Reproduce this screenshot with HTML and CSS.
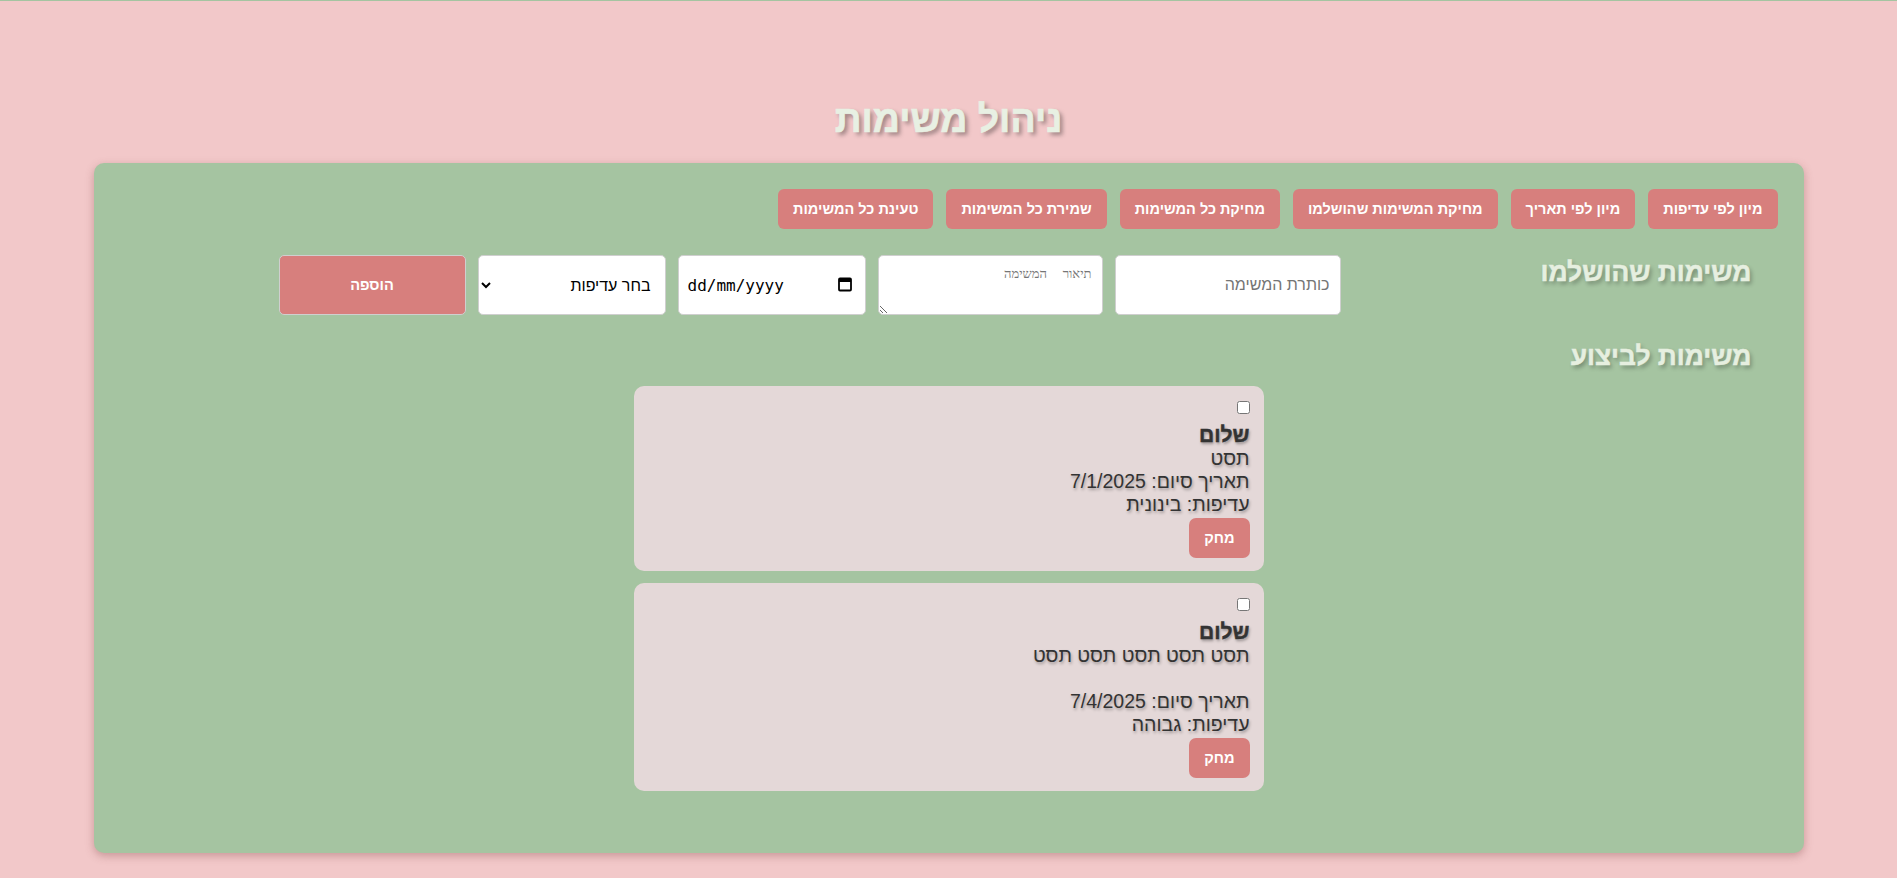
FILE: index.html
```html
<!DOCTYPE html>
<html lang="he" dir="rtl">
<head>
<meta charset="utf-8">
<title>ניהול משימות</title>
<link rel="stylesheet" href="styles.css">
</head>
<body>
<h1 class="page-title">ניהול משימות</h1>
<div class="container">
  <div class="actions">
    <button class="btn">מיון לפי עדיפות</button>
    <button class="btn">מיון לפי תאריך</button>
    <button class="btn">מחיקת המשימות שהושלמו</button>
    <button class="btn">מחיקת כל המשימות</button>
    <button class="btn">שמירת כל המשימות</button>
    <button class="btn">טעינת כל המשימות</button>
  </div>
  <div class="top-row">
    <div class="side">
      <h2 class="section-title">משימות שהושלמו</h2>
    </div>
    <div class="form-area">
      <form class="task-form">
        <input class="field field-title" type="text" placeholder="כותרת המשימה">
        <textarea class="field field-desc" placeholder="תיאור  המשימה"></textarea>
        <label class="field field-date">
          <input class="date-text" type="text" placeholder="dd/mm/yyyy">
          <svg class="cal-icon" width="14" height="16" viewBox="0 0 14 16" aria-hidden="true">
            <rect x="1" y="2.5" width="12" height="12" rx="1" fill="none" stroke="#000" stroke-width="1.8"/>
            <rect x="1" y="2.5" width="12" height="3.5" fill="#000"/>
          </svg>
        </label>
        <select class="field field-priority">
          <option>בחר עדיפות</option>
          <option>נמוכה</option>
          <option>בינונית</option>
          <option>גבוהה</option>
        </select>
        <button class="field add-btn" type="button">הוספה</button>
      </form>
    </div>
  </div>
  <h2 class="section-title todo-title">משימות לביצוע</h2>
  <div class="tasks">
    <div class="task-card">
      <input class="task-check" type="checkbox">
      <h3 class="task-name">שלום</h3>
      <div class="task-line">תסט</div>
      <div class="task-line">תאריך סיום: 7/1/2025</div>
      <div class="task-line">עדיפות: בינונית</div>
      <button class="del-btn">מחק</button>
    </div>
    <div class="task-card">
      <input class="task-check" type="checkbox">
      <h3 class="task-name">שלום</h3>
      <div class="task-line">תסט תסט תסט תסט תסט</div>
      <div class="task-line">&nbsp;</div>
      <div class="task-line">תאריך סיום: 7/4/2025</div>
      <div class="task-line">עדיפות: גבוהה</div>
      <button class="del-btn">מחק</button>
    </div>
  </div>
</div>
</body>
</html>
```
FILE: styles.css
```css
html, body {
  margin: 0;
  padding: 0;
}
body {
  background: #f2c8c9;
  border-top: 1px solid #a5c4a1;
  font-family: "Liberation Sans", Arial, sans-serif;
  min-height: 877px;
  box-sizing: border-box;
}
.page-title {
  margin: 0;
  padding-top: 96px;
  margin-bottom: 22px;
  text-align: center;
  font-size: 37.4px;
  line-height: 44px;
  font-weight: bold;
  color: #e8f0e3;
  -webkit-text-stroke: 0.6px #e8f0e3;
  text-shadow: 3px 3px 4px rgba(0, 0, 0, 0.35);
}
.container {
  width: 1710px;
  margin: 0 auto;
  box-sizing: border-box;
  background: #a5c4a1;
  border-radius: 10px;
  padding: 26px 26px 25px 26px;
  box-shadow: 0 3px 8px rgba(120, 60, 60, 0.35);
}
.actions {
  display: flex;
  gap: 13px;
  margin-bottom: 26px;
}
.btn {
  height: 40px;
  padding: 0 15px;
  border: none;
  border-radius: 6px;
  background: #d77f7d;
  color: #fff;
  font-family: "Liberation Sans", Arial, sans-serif;
  font-size: 14.5px;
  font-weight: bold;
}
.top-row {
  display: flex;
  align-items: flex-start;
}
.side {
  width: 279px;
  box-sizing: border-box;
  padding-right: 26px;
}
.section-title {
  margin: 0;
  font-size: 26.4px;
  line-height: 31px;
  font-weight: bold;
  color: #e6efe0;
  -webkit-text-stroke: 0.5px #e6efe0;
  text-shadow: 2px 3px 4px rgba(0, 0, 0, 0.3);
}
.side .section-title {
  margin-top: 2px;
}
.form-area {
  flex: 1;
  display: flex;
  justify-content: center;
}
.task-form {
  display: flex;
  gap: 12px;
  margin-right: -1px;
}
.field {
  height: 60px;
  box-sizing: border-box;
  border: 1px solid #cfcfcf;
  border-radius: 5px;
  background: #fff;
  padding: 10px;
  font-size: 16px;
  font-family: "Liberation Sans", Arial, sans-serif;
  color: #000;
}
.field::placeholder {
  color: #757575;
}
.field-title {
  width: 226px;
}
.field-desc {
  width: 225px;
  font-family: "DejaVu Sans Mono", monospace;
  font-size: 13px;
  resize: both;
}
.field-date {
  width: 188px;
  display: flex;
  align-items: center;
  justify-content: space-between;
  direction: ltr;
  padding: 0 13px 0 9px;
}
.date-text {
  width: 110px;
  border: none;
  outline: none;
  padding: 0;
  background: transparent;
  font-family: "DejaVu Sans Mono", monospace;
  font-size: 16px;
  color: #000;
}
.date-text::placeholder {
  color: #000;
}
.cal-icon {
  display: block;
  margin-top: -2px;
}
.field-priority {
  width: 188px;
}
.add-btn {
  width: 187px;
  background: #d77f7d;
  color: #fff;
  font-weight: bold;
  font-size: 14.6px;
}
.todo-title {
  padding-right: 26px;
  margin-top: 26px;
  margin-bottom: 14px;
}
.tasks {
  display: flex;
  flex-direction: column;
  align-items: center;
  gap: 12px;
  margin-bottom: 37px;
}
.task-card {
  width: 630px;
  box-sizing: border-box;
  background: #e4d8d8;
  border-radius: 10px;
  padding: 15px 14px 13px 14px;
  color: #333;
}
.task-check {
  display: block;
  margin: 0;
  width: 13px;
  height: 13px;
}
.task-name {
  margin: 9px 0 0 0;
  font-size: 21px;
  line-height: 24px;
  font-weight: bold;
  color: #333;
  -webkit-text-stroke: 0.4px #333;
  text-shadow: 1px 2px 3px rgba(0, 0, 0, 0.35);
}
.task-line {
  font-size: 19.5px;
  line-height: 23px;
  text-shadow: 1px 2px 3px rgba(0, 0, 0, 0.3);
}
.del-btn {
  display: block;
  margin-top: 2px;
  height: 40px;
  padding: 0 15px;
  border: none;
  border-radius: 7px;
  background: #d77f7d;
  color: #fff;
  font-family: "Liberation Sans", Arial, sans-serif;
  font-size: 14.6px;
  font-weight: bold;
}
```
